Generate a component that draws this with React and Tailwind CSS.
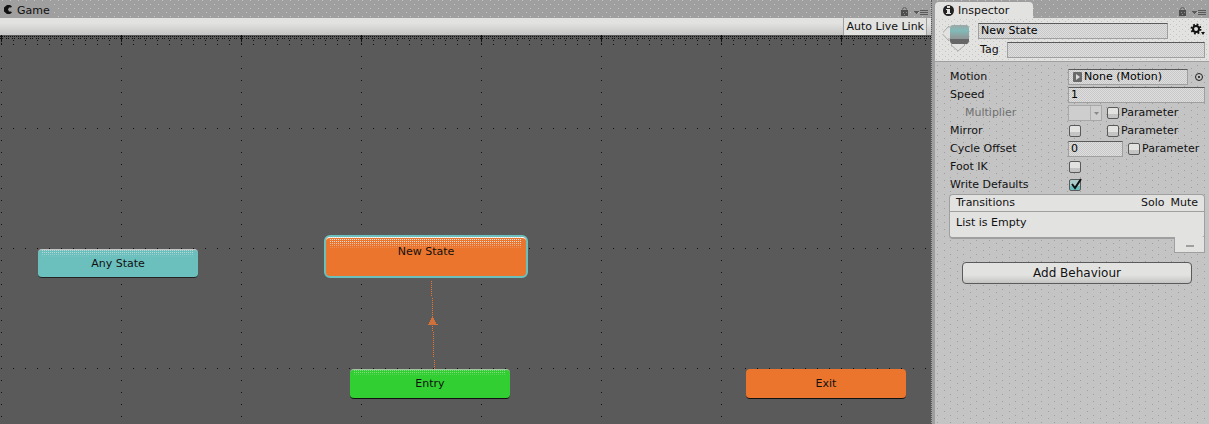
const dots = "bg-[radial-gradient(circle_at_2.5px_0.5px,#c4c4c4_0.5px,transparent_0.6px),radial-gradient(circle_at_6.5px_4.5px,#c4c4c4_0.5px,transparent_0.6px)] bg-size-[8px_8px]";
const panelDots = "bg-[radial-gradient(circle_at_2.5px_3.5px,#9f9f9f_0.5px,transparent_0.6px),radial-gradient(circle_at_9.5px_6.5px,#9f9f9f_0.5px,transparent_0.6px)] bg-size-[13px_7px]";
const headDots = "bg-[radial-gradient(circle_at_1.5px_1.5px,#c4c4c4_0.5px,transparent_0.6px),radial-gradient(circle_at_4.5px_3.5px,#c4c4c4_0.5px,transparent_0.6px)] bg-size-[6px_5px]";
const dither = "bg-[repeating-conic-gradient(#c8c8c8_0_25%,#dedede_0_50%)] bg-size-[2px_2px]";
const field = "min-w-0 appearance-none border border-[#9f9f9f] border-t-[#5a5a5a] text-black outline-none " + dither;
const shine = "absolute inset-x-1 top-0 bg-[radial-gradient(circle_at_0.5px_0.5px,#e2e2e0_0.5px,transparent_0.6px)] bg-size-[2px_2px] mask-b-from-40% mask-b-to-100%";

function LockMenu() {
  return (
    <svg className="mb-px h-3 w-7" viewBox="0 0 28 12" shapeRendering="crispEdges" aria-hidden="true">
      <path d="M2.500 6V3.500h1v-1h2v1h1V6" fill="none" stroke="#777" />
      <rect x="1" y="5" width="7" height="6" fill="#4d4d4d" />
      <path d="M3 7h1v1H3zM6 7h1v1H6zM4 9h1v1H4z" fill="#8d8d8d" />
      <path d="M14 6h5v1h-1v1h-1v1h-1V8h-1V7h-1z" fill="#5a5a5a" />
      <path d="M20 5.500h8M20 7.500h8M20 9.500h8" stroke="#5a5a5a" />
    </svg>
  );
}

function Check({ id, label, checked = false }) {
  return (
    <span className="flex items-center gap-0.5">
      <span className="relative flex h-3 w-3">
        <input
          id={id}
          type="checkbox"
          defaultChecked={checked}
          className="peer h-3 w-3 appearance-none rounded-xs border border-[#5a5a5a] bg-linear-to-b from-[#e2e2e0] from-60% to-[#c4c4c4] to-60% checked:from-[#a9cbc9] checked:to-[#6bc0be]"
        />
        <svg className="pointer-events-none absolute bottom-0 left-0 hidden h-3 w-3 overflow-visible peer-checked:block" viewBox="0 0 12 12">
          <path d="M3 5l3 4 6-9" fill="none" stroke="#111" strokeWidth="2" />
        </svg>
      </span>
      {label && <label htmlFor={id}>{label}</label>}
    </span>
  );
}

function Row({ name, htmlFor, children, muted }) {
  return (
    <div className="flex h-[18px] items-center pr-1">
      <label htmlFor={htmlFor} className={muted ? "w-[118px] shrink-0 pl-[15px] text-[#707070]" : "w-[118px] shrink-0"}>{name}</label>
      {children}
    </div>
  );
}

function Graph() {
  return (
    <div className="relative flex-1 overflow-hidden bg-[#5a5a5a]">
      <svg className="absolute inset-0 h-full w-full" shapeRendering="crispEdges" aria-hidden="true">
        <defs>
          <pattern id="grid" x="1" y="93" width="120" height="120" patternUnits="userSpaceOnUse">
            <path d="M0 .5H120" stroke="#111" strokeDasharray="1 11" />
            <path d="M.5 0V120" stroke="#111" strokeDasharray="1 11" />
          </pattern>
          <pattern id="tick" x="1" y="0" width="12" height="12" patternUnits="userSpaceOnUse">
            <path d="M0 5h1v1H0zM0 9h1v1H0z" fill="#111" />
          </pattern>
          <pattern id="major" x="1" y="0" width="120" height="12" patternUnits="userSpaceOnUse">
            <path d="M0 0h1v5H0zM0 6h1v1H0zM0 8h1v1H0z" fill="#111" />
          </pattern>
        </defs>
        <rect width="100%" height="100%" fill="url(#grid)" />
        <rect width="100%" height="12" fill="url(#tick)" />
        <rect width="100%" height="12" fill="url(#major)" />
        <path d="M0 1.500H2000" stroke="#111" strokeDasharray="1 1" />
        <path d="M0 3.500H2000" stroke="#111" strokeDasharray="1 1 1 3" />
        <path d="M431.500 246v15M432.500 263v19M432.500 291v5M433.500 297v26M434.500 325v9" stroke="#ec752e" strokeDasharray="1 1" />
        <path d="M432 281h1v2h1v2h1v2h1v2h2v1h-10v-1h1v-2h1v-2h1v-2h1z" fill="#d17039" />
      </svg>
      <button className="absolute top-[214px] left-[38px] h-[29px] w-40 rounded-[4px] border-t border-b border-t-[#c4c4c4] border-b-[#222] bg-[#6bc0be]">
        <span className={"h-[7px] opacity-70 " + shine} />
        <span className="relative">Any State</span>
      </button>
      <button className="absolute top-[200px] left-[324px] h-[43px] w-[204px] rounded-md border-2 border-[#6bc0be] bg-[#ec752e] pb-2.5">
        <span className="absolute inset-0 rounded-sm border-t border-white" />
        <span className={"h-3 " + shine} />
        <span className="relative">New State</span>
      </button>
      <button className="absolute top-[334px] left-[350px] h-[30px] w-40 rounded-[4px] border-t border-b border-t-[#9fc49f] border-b-[#111] bg-[#32cf32]">
        <span className={"h-[6px] opacity-50 " + shine} />
        <span className="relative">Entry</span>
      </button>
      <button className="absolute top-[334px] left-[746px] h-[30px] w-40 rounded-[4px] border-b border-[#111] bg-[#ec752e]">Exit</button>
    </div>
  );
}

export default function App() {
  return (
    <div className="flex h-screen min-h-[424px] bg-[#9f9f9f] font-['DejaVu_Sans',sans-serif] text-[11px] leading-4 text-[#111]">
      <main className="flex min-w-0 flex-1 flex-col">
        <header className={"flex h-[18px] items-end justify-between pr-[3px] " + dots}>
          <h1 className="flex h-4 items-center gap-[5px] bg-[#9f9f9f] pt-0.5 pr-1 pl-1">
            <svg className="mb-[3px] h-[9px] w-2" viewBox="0 0 8 9" aria-hidden="true"><path d="M8 1.500 6 0H3L0 2.500v4L3 9h3l2-1.500-1-1H5l-1-2 1-2h2z" fill="#111" /></svg>
            Game
          </h1>
          <LockMenu />
        </header>
        <div className="flex h-[17px] justify-end bg-linear-to-b from-[#e2e2e0] from-30% to-[#c4c4c4] pr-1">
          <button className="border-x border-[#9f9f9f] bg-[#e2e2e0] px-0.5 pt-px">Auto Live Link</button>
        </div>
        <Graph />
      </main>
      <div className="w-1 border-l border-dotted border-[#5a5a5a]" />
      <aside className="flex w-[274px] shrink-0 flex-col bg-[#c4c4c4]">
        <header className={"flex h-[18px] items-end justify-between bg-[#9f9f9f] pr-[3px] " + dots}>
          <h2 className="flex h-4 items-center gap-1 rounded-t-sm bg-[#e2e2e0] pt-0.5 pr-6 pl-2">
            <svg className="mb-0.5 h-[11px] w-[11px]" viewBox="0 0 11 11" aria-hidden="true"><circle cx="5.500" cy="5.500" r="5.500" fill="#222" /><path d="M4 1h3v2H4zM3 4h4v4h1v1H3V8h1V5H3z" fill="#e2e2e0" /></svg>
            Inspector
          </h2>
          <LockMenu />
        </header>
        <div className={"flex h-11 gap-[7px] border-b border-[#9f9f9f] bg-[#e2e2e0] pr-1 pl-2 " + headDots}>
          <svg className="mt-1 h-[30px] w-7 shrink-0" viewBox="0 0 28 30" aria-hidden="true">
            <defs>
              <linearGradient id="block" x1="0" y1="0" x2="0" y2="1">
                <stop offset="0" stopColor="#9aa8a7" />
                <stop offset=".3" stopColor="#80bbb9" />
                <stop offset=".6" stopColor="#8e9e9d" />
                <stop offset="1" stopColor="#8a8a8a" />
              </linearGradient>
            </defs>
            <path d="M6 6V4L-1 11.500 6 19v-3M10 21l-2 2 7 6 7-6-2-2" fill="#e2e2e0" stroke="#a8a8a8" />
            <rect x="7" y="3" width="19" height="19" rx="3" fill="url(#block)" />
            <path d="M7 17h19v2l-2 3H9l-2-3z" fill="#666" />
          </svg>
          <div className="flex min-w-0 flex-1 flex-col gap-[3px] pt-[5px]">
            <div className="flex items-start gap-[21px]">
              <input aria-label="State name" defaultValue="New State" className={"h-4 flex-1 px-0.5 " + field} />
              <button aria-label="Settings" className="flex">
                <svg className="h-3 w-4" viewBox="0 0 16 12" aria-hidden="true">
                  <circle cx="7" cy="6" r="3" fill="none" stroke="#111" strokeWidth="2" />
                  <circle cx="7" cy="6" r="4.500" fill="none" stroke="#111" strokeWidth="2" strokeDasharray="1.770 1.770" />
                  <path d="M12 9h4l-2 3z" fill="#111" />
                </svg>
              </button>
            </div>
            <div className="flex items-center gap-2 pl-0.5">
              <label htmlFor="tag">Tag</label>
              <input id="tag" className={"h-4 flex-1 px-0.5 " + field} />
            </div>
          </div>
        </div>
        <div className={"flex-1 pt-[6px] pl-[15px] " + panelDots}>
          <Row name="Motion">
            <button className={"flex h-4 w-30 items-center gap-0.5 pl-1 " + field}>
              <svg className="h-[10px] w-[9px]" viewBox="0 0 9 10" aria-hidden="true"><rect width="9" height="10" rx="1" fill="#6a6a6a" /><path d="M3 2l4 3-4 3z" fill="#dcdcdc" /></svg>
              None (Motion)
            </button>
            <button aria-label="Choose motion" className="ml-auto flex pr-0.5">
              <svg className="h-2 w-2" viewBox="0 0 8 8" aria-hidden="true"><circle cx="4" cy="4" r="3.500" fill="none" stroke="#222" /><circle cx="4" cy="4" r="1" fill="#111" /></svg>
            </button>
          </Row>
          <Row name="Speed" htmlFor="speed"><input id="speed" defaultValue="1" className={"h-4 flex-1 px-0.5 " + field} /></Row>
          <Row name="Multiplier" htmlFor="multiplier" muted>
            <span className="relative mr-[5px] flex">
              <select id="multiplier" disabled className="h-4 w-[34px] appearance-none border border-[#a8a8a8] bg-[#cecece]"><option></option></select>
              <svg className="pointer-events-none absolute top-0 right-0 h-4 w-3" viewBox="0 0 12 16" aria-hidden="true"><path d="M.5 1v14" stroke="#b0b0b0" /><path d="M4 7h5l-2.500 3z" fill="#888" /></svg>
            </span>
            <Check id="multiplier-parameter" label="Parameter" />
          </Row>
          <Row name="Mirror" htmlFor="mirror">
            <span className="w-[39px] pl-px"><Check id="mirror" /></span>
            <Check id="mirror-parameter" label="Parameter" />
          </Row>
          <Row name="Cycle Offset" htmlFor="offset">
            <input id="offset" defaultValue="0" className={"mr-[5px] h-4 w-[55px] px-0.5 " + field} />
            <Check id="offset-parameter" label="Parameter" />
          </Row>
          <Row name="Foot IK" htmlFor="foot"><span className="pl-px"><Check id="foot" /></span></Row>
          <Row name="Write Defaults" htmlFor="defaults"><span className="pl-px"><Check id="defaults" checked /></span></Row>
          <section className="-ml-px pr-1">
            <div className="rounded-sm border border-b-2 border-[#9f9f9f] bg-[#e2e2e0]">
              <div className="flex h-[17px] items-center border-b border-[#9f9f9f] px-1.5">
                <h3 className="flex-1">Transitions</h3><span className="mr-1.5">Solo</span><span>Mute</span>
              </div>
              <p className="h-[25px] px-1.5 pt-[3px]">List is Empty</p>
            </div>
            <button aria-label="Remove transition" className="-mt-0.5 ml-auto flex h-4 w-[31px] items-center justify-center border border-t-0 border-[#9f9f9f] bg-[#e2e2e0] pt-0.5"><span className="h-0.5 w-2 bg-[#9f9f9f]" /></button>
          </section>
          <button className="mt-[9px] ml-3 flex h-[22px] w-[230px] items-center justify-center rounded-sm border border-[#5a5a5a] bg-linear-to-b from-[#e2e2e0] from-60% to-[#c4c4c4] text-xs">Add Behaviour</button>
        </div>
      </aside>
    </div>
  );
}
